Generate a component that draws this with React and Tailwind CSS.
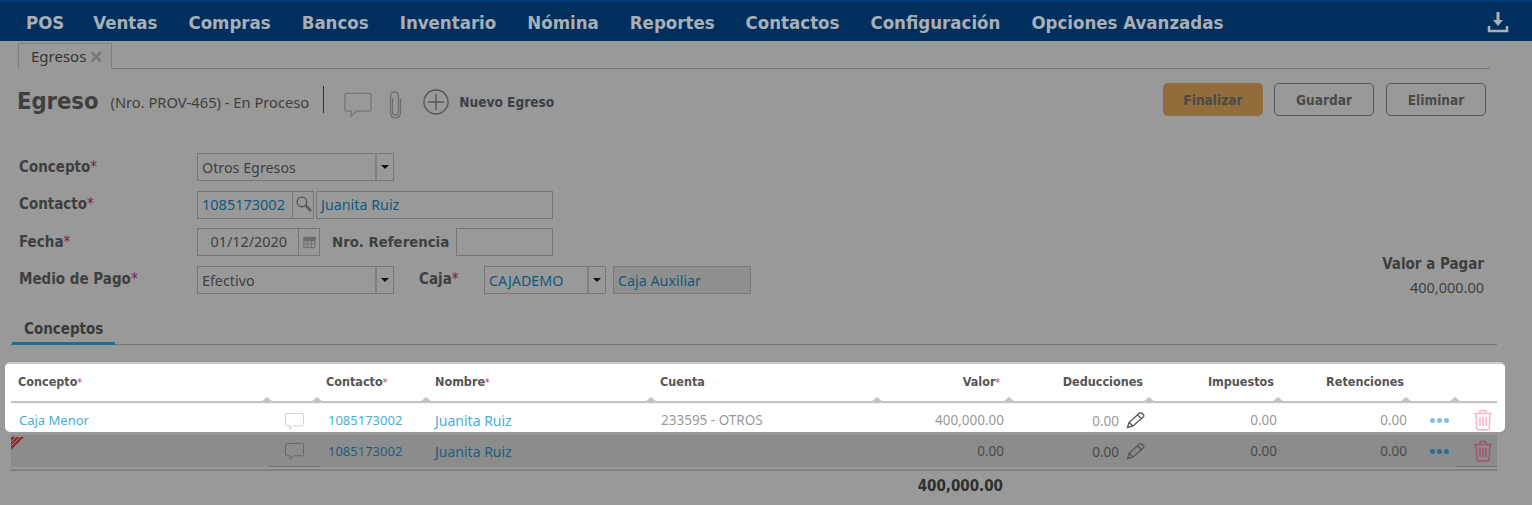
import React from 'react';

const regular = "font-['Noto_Sans',sans-serif]";
const bold = "font-['DejaVu_Sans',sans-serif] font-bold [font-stretch:condensed]";
const gridCols = 'grid grid-cols-[258px_50px_109px_225px_226px_132px_140px_129px_128px_49px_40px]';

const navItems = ['POS', 'Ventas', 'Compras', 'Bancos', 'Inventario', 'Nómina', 'Reportes', 'Contactos', 'Configuración', 'Opciones Avanzadas'];

function Req() {
  return <span className="text-[#7a1f52] font-normal">*</span>;
}

function HeadReq() {
  return <span className="text-[#c0268a] text-[10px] font-normal">*</span>;
}

function Bubble({ className }) {
  return (
    <svg viewBox="0 0 22 20" className={className} fill="none" stroke="currentColor" strokeWidth="1">
      <path d="M2.500 1.500h17a1 1 0 0 1 1 1v11a1 1 0 0 1-1 1H10l-4 3.500v-3.500H2.500a1 1 0 0 1-1-1v-11a1 1 0 0 1 1-1z" />
    </svg>
  );
}

function Trash({ className }) {
  return (
    <svg viewBox="0 0 20 22" className={className} fill="none" stroke="currentColor" strokeWidth="1.600">
      <path d="M1 4.500h18M7 4.500V2.500a1 1 0 0 1 1-1h4a1 1 0 0 1 1 1v2M3 4.500l.8 15a1.500 1.500 0 0 0 1.500 1.400h9.400a1.500 1.500 0 0 0 1.500-1.400l.8-15M7 8v9M10 8v9M13 8v9" />
    </svg>
  );
}

function Pencil() {
  return (
    <svg viewBox="0 0 20 20" className="w-[20px] h-[20px] text-[#555]" fill="none" stroke="currentColor" strokeWidth="1.300">
      <path d="M1.500 17.500l1.500-5L13.500 3a1.500 1.500 0 0 1 2 0l2 1.800a1.500 1.500 0 0 1 0 2L7 16z M11.500 5l4 3.800 M3 12.500l4 3.500" />
    </svg>
  );
}

function Dots({ className }) {
  return (
    <div className={`flex gap-[2px] ${className}`}>
      <span className="w-[5px] h-[5px] rounded-full bg-current" />
      <span className="w-[5px] h-[5px] rounded-full bg-current" />
      <span className="w-[5px] h-[5px] rounded-full bg-current" />
    </div>
  );
}

function Caret() {
  return <span className="w-0 h-0 border-x-[4px] border-x-transparent border-t-[4px] border-t-[#111]" />;
}

function SelectBox({ value, width, textClass = 'text-[#3f3f3f]' }) {
  return (
    <div className={`flex h-[28px] border border-[#777] ${width}`}>
      <div className={`flex-1 flex items-center pl-[4px] pt-[1px] text-[14.3px] ${textClass}`}>{value}</div>
      <div className="w-[18px] flex items-center justify-center border-l-2 border-[#808080]">
        <Caret />
      </div>
    </div>
  );
}

function FormLabel({ children, width = 'w-[178px]', className = '' }) {
  return <div className={`${bold} ${width} text-[15px] text-[#3f3f3f] ${className}`}>{children}</div>;
}

function HeadCell({ children, right, className = '' }) {
  return (
    <div className={`relative h-full flex items-center ${bold} text-[12.5px] text-[#555] ${right ? 'justify-end' : ''} ${className}`}>
      <span>{children}</span>
      <span className="absolute right-[-3px] bottom-0 w-0 h-0 border-x-[5px] border-x-transparent border-b-[4px] border-b-[#c4c4c4]" />
    </div>
  );
}

function Row({ first }) {
  const link = first ? 'text-[#46aed6]' : 'text-[#1d5f7c]';
  const num = first ? 'text-[#999]' : 'text-[#4a4a4a]';
  const underline = first ? '' : 'border-b border-[#6f6f6f]';
  return (
    <div className={`${gridCols} h-full items-center text-[13.5px] ${regular}`}>
      <div className={`pl-[8px] pt-[1px] text-[13px] ${link}`}>{first ? 'Caja Menor' : ''}</div>
      <div className={`h-full flex items-center justify-center pt-[2px] ${underline}`}>
        <Bubble className={`w-[21px] h-[19px] ${first ? 'text-[#d0d0d0]' : 'text-[#666]'}`} />
      </div>
      <div className={`pl-[9px] pt-[1px] text-[13px] ${link}`}>1085173002</div>
      <div className={`pl-[7px] text-[14px] ${link}`}>Juanita Ruiz</div>
      <div className={`pl-[8px] ${num}`}>{first ? '233595 - OTROS' : ''}</div>
      <div className={`text-right pr-[7px] ${num}`}>{first ? '400,000.00' : '0.00'}</div>
      <div className={`flex items-center justify-end pr-[5px] gap-[7px] ${num}`}>
        <span className="pt-[3px]">0.00</span>
        <Pencil />
      </div>
      <div className={`text-right pr-[3px] ${num}`}>0.00</div>
      <div className={`text-right pr-[1px] ${num}`}>0.00</div>
      <div className="flex justify-center pl-[14px]">
        <Dots className={first ? 'text-[#7cc4e2]' : 'text-[#2c6f8f]'} />
      </div>
      <div className={`h-full flex items-center justify-center pl-[12px] ${underline}`}>
        <Trash className={`w-[20px] h-[22px] ${first ? 'text-[#fbb6cf]' : 'text-[#a0566f]'}`} />
      </div>
    </div>
  );
}

export default function App() {
  return (
    <div className={`w-[1532px] h-[505px] overflow-hidden bg-[#999] ${regular} text-[#3f3f3f]`}>
      <nav className="h-[41px] bg-[#002f5d] border-t-2 border-[#003c7c] flex items-center justify-between pl-[26px] pr-[23px]">
        <div className={`flex gap-[31px] pt-[2px] ${bold} text-[18.5px] text-[#a9afb7]`}>
          {navItems.map((item, i) => (
            <span key={item} className={i === 0 ? 'mr-[-2px]' : ''}>{item}</span>
          ))}
        </div>
        <svg viewBox="0 0 22 22" className="w-[22px] h-[22px] text-[#a9afb7]" fill="none" stroke="currentColor">
          <path d="M11 1v11" strokeWidth="3" />
          <path d="M6 9h10l-5 6z" fill="currentColor" stroke="none" />
          <path d="M2 15v5h18v-5" strokeWidth="2.500" />
        </svg>
      </nav>

      <div className="ml-[18px] w-[1472px] h-[28px] border-b border-[#777] flex items-end">
        <div className="h-[26px] mb-[-1px] w-[94px] border border-b-0 border-[#808080] bg-[#999] flex items-center pl-[12px] gap-[3px] text-[15px] text-[#333]">
          Egresos
          <span className="text-[#777] text-[17px] font-bold leading-none">✕</span>
        </div>
      </div>

      <div className="mt-[14px] h-[33px] pl-[17px] pr-[46px] flex items-center justify-between">
        <div className="flex items-center pt-[5px]">
          <span className={`${bold} text-[23.5px] text-[#3f3f3f]`}>Egreso</span>
          <span className="ml-[12px] text-[14.7px]">(Nro. PROV-465) - En Proceso</span>
          <span className="ml-[14px] w-px h-[27px] bg-[#333] mt-[-5px]" />
          <Bubble className="ml-[19px] w-[30px] h-[28px] mt-[6px] text-[#777]" />
          <svg viewBox="0 0 16 28" className="ml-[14px] w-[17px] h-[28px] mt-[6px] text-[#6e6e6e]" fill="none" stroke="currentColor" strokeWidth="1.300">
            <path d="M5 7v14a3 3 0 0 0 6 0V5a4 4 0 0 0-8 0v17a5 5 0 0 0 10 0V8" />
          </svg>
          <svg viewBox="0 0 26 26" className="ml-[19px] w-[26px] h-[26px] text-[#555]" fill="none" stroke="currentColor" strokeWidth="1.300">
            <circle cx="13" cy="13" r="12" />
            <path d="M13 5v16M5 13h16" />
          </svg>
          <span className={`ml-[10px] ${bold} text-[13.6px] text-[#3a3f4a]`}>Nuevo Egreso</span>
        </div>
        <div className={`flex gap-[11px] ${bold} text-[13.6px] text-[#4a4a4a]`}>
          <button className="w-[100px] h-[33px] pt-[1px] rounded-[5px] bg-[#926d3b]">Finalizar</button>
          <button className="w-[100px] h-[33px] pt-[1px] rounded-[5px] border border-[#555]">Guardar</button>
          <button className="ml-[1px] w-[100px] h-[33px] pt-[1px] rounded-[5px] border border-[#555]">Eliminar</button>
        </div>
      </div>

      <div className="mt-[37px] pl-[19px] pr-[48px] flex justify-between items-end">
        <div className="flex flex-col">
          <div className="flex items-center h-[28px]">
            <FormLabel>Concepto<Req /></FormLabel>
            <SelectBox value="Otros Egresos" width="w-[197px]" />
          </div>
          <div className="flex items-center h-[28px] mt-[10px]">
            <FormLabel className="pb-[2px]">Contacto<Req /></FormLabel>
            <div className="flex h-[28px] w-[117px] border border-[#777]">
              <div className="flex-1 flex items-center pl-[4px] text-[14.5px] text-[#0f5b7d]">1085173002</div>
              <div className="w-[21px] flex justify-center pt-[3px] border-l border-[#777]">
                <svg viewBox="0 0 16 16" className="w-[17px] h-[17px] text-[#555]" fill="none" stroke="currentColor">
                  <circle cx="6.500" cy="6.500" r="4.500" strokeWidth="1.300" />
                  <path d="M10 10l5 5" strokeWidth="2.200" />
                </svg>
              </div>
            </div>
            <div className="ml-[2px] w-[237px] h-[28px] border border-[#777] flex items-center pl-[4px] text-[14.3px] text-[#0f5b7d]">Juanita Ruiz</div>
          </div>
          <div className="flex items-center h-[28px] mt-[9px]">
            <FormLabel>Fecha<Req /></FormLabel>
            <div className="flex h-[28px] w-[123px] border border-[#777]">
              <div className="flex-1 flex items-center justify-end pr-[11px] text-[14.4px]">01/12/2020</div>
              <div className="w-[21px] flex items-center justify-center border-l border-[#777]">
                <svg viewBox="0 0 14 14" className="w-[13px] h-[13px] text-[#6b6b6b]" fill="none" stroke="currentColor">
                  <path d="M1 1.500h12v11H1zM1 5h12M1 8.500h12M5 5v7.500M9 5v7.500" />
                  <path d="M1 1.500h12v3H1z" fill="currentColor" />
                </svg>
              </div>
            </div>
            <div className={`${bold} ml-[12px] w-[124px] text-[14.8px] text-[#3f3f3f]`}>Nro. Referencia</div>
            <div className="w-[97px] h-[28px] border border-[#777]" />
          </div>
          <div className="flex items-center h-[28px] mt-[10px]">
            <FormLabel className="pb-[2px]">Medio de Pago<Req /></FormLabel>
            <SelectBox value="Efectivo" width="w-[197px]" />
            <FormLabel width="w-[65px]" className="ml-[25px] pb-[2px]">Caja<Req /></FormLabel>
            <SelectBox value="CAJADEMO" width="w-[122px]" textClass="text-[#0f5b7d]" />
            <div className="ml-[7px] w-[138px] h-[28px] border border-[#777] bg-[#8f8f8f] flex items-center pl-[4px] pt-[1px] text-[14.3px] text-[#0f5b7d]">Caja Auxiliar</div>
          </div>
        </div>
        <div className="text-right mb-[-5px]">
          <div className={`${bold} text-[15px] text-[#3f3f3f]`}>Valor a Pagar</div>
          <div className="mt-[2px] text-[14.5px]">400,000.00</div>
        </div>
      </div>

      <div className="mt-[28px] ml-[10px] w-[1487px] h-[23px] border-b border-[#777] flex">
        <div className={`ml-[2px] w-[103px] h-[23px] border-b-[3px] border-[#1a6f96] pl-[12px] leading-[15px] ${bold} text-[15px] text-[#3a3a3a]`}>Conceptos</div>
      </div>

      <div className="mt-[17px] ml-[5px] w-[1500px] h-[70px] bg-white rounded-[5px] border-t-2 border-[#c8c8c8]">
        <div className="ml-[6px] w-[1486px] h-[39px] border-b-2 border-[#c4c4c4]">
          <div className={`${gridCols} h-full`}>
            <HeadCell className="pl-[7px]">Concepto<HeadReq /></HeadCell>
            <HeadCell />
            <HeadCell className="pl-[7px]">Contacto<HeadReq /></HeadCell>
            <HeadCell className="pl-[7px]">Nombre<HeadReq /></HeadCell>
            <HeadCell className="pl-[7px]">Cuenta</HeadCell>
            <HeadCell right className="pr-[11px]">Valor<HeadReq /></HeadCell>
            <HeadCell right className="pr-[8px]">Deducciones</HeadCell>
            <HeadCell right className="pr-[6px]">Impuestos</HeadCell>
            <HeadCell right className="pr-[4px]">Retenciones</HeadCell>
            <HeadCell />
            <div />
          </div>
        </div>
        <div className="ml-[6px] w-[1486px] h-[29px] pt-[4px] border-t border-[#f4f4f4]">
          <Row first />
        </div>
      </div>

      <div className="relative mt-[3px] ml-[11px] w-[1486px] h-[32px] bg-[#8c8c8c]">
        <Row />
        <svg viewBox="0 0 13 13" className="absolute left-0 top-[2px] w-[13px] h-[13px]">
          <path d="M0 0h13L0 13z" fill="#8f2a33" />
          <path d="M0 9L9 0M0 5L5 0" stroke="#8c8c8c" strokeWidth="1" />
        </svg>
      </div>
      <div className="ml-[10px] w-[1487px] mt-[2px] border-t-2 border-[#808080]" />
      <div className={`ml-[11px] w-[992px] mt-[4px] text-right ${bold} text-[15px] text-[#2f2f2f]`}>400,000.00</div>
    </div>
  );
}
